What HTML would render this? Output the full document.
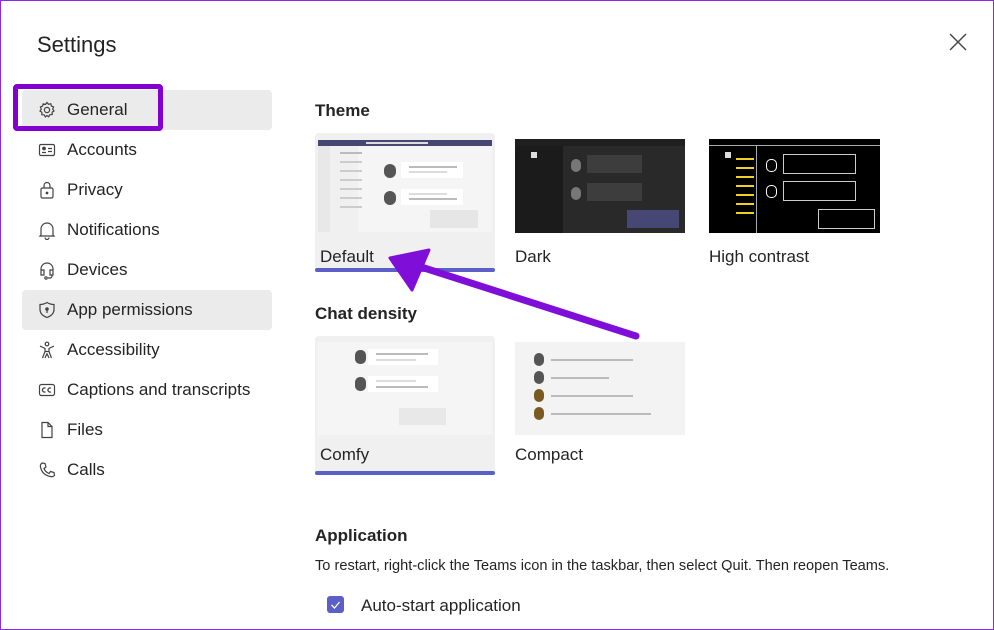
<!DOCTYPE html>
<html><head><meta charset="utf-8"><style>
*{margin:0;padding:0;box-sizing:border-box}
body{width:994px;height:630px;background:#fff;font-family:"Liberation Sans",sans-serif;color:#242424;position:relative;overflow:hidden}
.frame{position:absolute;inset:0;border:1.5px solid #8a2be2;pointer-events:none;z-index:9}
.abs{position:absolute}
.item{position:absolute;left:37px;height:20px;display:flex;align-items:center;font-size:17px;color:#242424}
.item svg{width:20px;height:20px;margin-right:10px;fill:none;stroke:#424242;stroke-width:1.2}
.h{font-weight:bold;font-size:17px;position:absolute}
.lbl{position:absolute;font-size:17px;color:#242424}
.bar{height:2px;background:#bbb;position:absolute}
.wb{background:#fff;position:absolute}
.wb i{display:block;position:absolute;left:8px;height:2px;background:#bbb}
</style></head><body>
<div class="frame"></div>
<div class="abs" style="left:37px;top:32px;font-size:22px">Settings</div>
<svg class="abs" style="left:949px;top:33px" width="18" height="18"><path d="M1 1L17 17M17 1L1 17" stroke="#424242" stroke-width="1.4"/></svg>

<div class="abs" style="left:22px;top:90px;width:250px;height:40px;background:#ebebeb;border-radius:4px"></div>
<div class="abs" style="left:22px;top:290px;width:250px;height:40px;background:#ebebeb;border-radius:4px"></div>
<div class="abs" style="left:13px;top:84px;width:150px;height:47px;border:5px solid #8300d0;border-radius:4px"></div>

<div class="item" style="top:100px"><svg viewBox="0 0 20 20"><circle cx="10" cy="10" r="2.6"/><path d="M10 2.5l1.5 1.8 2.3-.6.6 2.3 2.2.9-.9 2.2 1.3 1.9-1.9 1.2.1 2.4-2.4.1-1.1 2.1L10 15.6l-1.7 1.3-1.1-2.1-2.4-.1.1-2.4L3 11.1l1.3-1.9-.9-2.2 2.2-.9.6-2.3 2.3.6z"/></svg>General</div>
<div class="item" style="top:140px"><svg viewBox="0 0 20 20"><rect x="2.5" y="4.5" width="15" height="11" rx="1.5"/><circle cx="7" cy="8.5" r="1.3" fill="#424242"/><path d="M5 12.5h4M11 8.5h4M11 11.5h4"/></svg>Accounts</div>
<div class="item" style="top:180px"><svg viewBox="0 0 20 20"><rect x="4" y="8" width="12" height="10" rx="1.5"/><path d="M7 8V5.5a3 3 0 016 0V8"/><circle cx="10" cy="13" r=".8" fill="#424242"/></svg>Privacy</div>
<div class="item" style="top:220px"><svg viewBox="0 0 20 20"><path d="M4 15V9a6 6 0 0112 0v6l1 1H3z M8 17.5a2 2 0 004 0"/></svg>Notifications</div>
<div class="item" style="top:260px"><svg viewBox="0 0 20 20"><path d="M4 13V9a6 6 0 0112 0v4M4 10h3v5H4zM13 10h3v5h-3zM15 15v1a2 2 0 01-2 2h-2"/><circle cx="9" cy="18" r="1.2"/></svg>Devices</div>
<div class="item" style="top:300px"><svg viewBox="0 0 20 20"><path d="M10 2.5c2.5 1.5 4.5 2 7 2v5c0 4-3 6.5-7 8-4-1.5-7-4-7-8v-5c2.5 0 4.5-.5 7-2z"/><circle cx="10" cy="9" r="1.2" fill="#424242"/><path d="M10 10v3"/></svg>App permissions</div>
<div class="item" style="top:340px"><svg viewBox="0 0 20 20"><circle cx="10" cy="4" r="1.8"/><path d="M3 6l5 2.5v3L5.5 18M17 6l-5 2.5v3L14.5 18M8 11.5h4M10 13.5l-2 4.5M10 13.5l2 4.5"/></svg>Accessibility</div>
<div class="item" style="top:380px"><svg viewBox="0 0 20 20"><rect x="2.5" y="4.5" width="15" height="11" rx="2"/><path d="M8.5 8.3a2 2 0 100 3.4M14 8.3a2 2 0 100 3.4"/></svg>Captions and transcripts</div>
<div class="item" style="top:420px"><svg viewBox="0 0 20 20"><path d="M5 2.5h6l4 4v11H5zM11 2.5v4h4"/></svg>Files</div>
<div class="item" style="top:460px"><svg viewBox="0 0 20 20"><path d="M5 3l3 .5 1 3.5-2 1.5c1 2.5 2.5 4 5 5l1.5-2 3.5 1 .5 3c-1 1-2.5 1.5-4 1C8 15.5 4.5 12 3.5 7 3 5.5 3.8 4 5 3z"/></svg>Calls</div>

<div class="h" style="left:315px;top:101px">Theme</div>
<div class="abs" style="left:315px;top:133px;width:180px;height:139px;background:#f0f0f0;border-radius:4px"></div>
<div class="abs" style="left:315px;top:268px;width:180px;height:4px;background:#5b5fc7;border-radius:2px"></div>
<div class="abs" style="left:318px;top:140px;width:174px;height:92px;background:#f5f5f5">
 <div class="abs" style="left:0;top:0;width:174px;height:6px;background:#464775"></div>
 <div class="abs" style="left:48px;top:2px;width:62px;height:2px;background:#ddd"></div>
 <div class="abs" style="left:0;top:6px;width:12px;height:86px;background:#e8e8e8"></div>
 <div class="abs" style="left:12px;top:6px;width:28px;height:86px;background:#f0f0f0"></div>
 <div class="bar" style="left:22px;top:12px;width:22px;box-shadow:0 9px #ccc,0 18px #ccc,0 27px #ccc,0 36px #ccc,0 45px #ccc,0 54px #ccc"></div>
 <div class="abs" style="left:66px;top:24px;width:12px;height:14px;border-radius:6px;background:#555"></div>
 <div class="abs" style="left:66px;top:51px;width:12px;height:14px;border-radius:6px;background:#555"></div>
 <div class="wb" style="left:83px;top:22px;width:62px;height:16px"><i style="top:4px;width:48px"></i><i style="top:9px;width:38px;background:#ddd"></i></div>
 <div class="wb" style="left:83px;top:49px;width:62px;height:16px"><i style="top:4px;width:38px;background:#ddd"></i><i style="top:9px;width:48px"></i></div>
 <div class="abs" style="left:112px;top:70px;width:48px;height:18px;background:#e6e6e6"></div>
</div>
<div class="lbl" style="left:320px;top:247px">Default</div>
<div class="abs" style="left:515px;top:139px;width:170px;height:94px;background:#292929">
 <div class="abs" style="left:0;top:0;width:170px;height:7px;background:#1f1f1f"></div>
 <div class="abs" style="left:0;top:7px;width:48px;height:87px;background:#1b1b1b"></div>
 <div class="abs" style="left:16px;top:13px;width:6px;height:6px;background:#ddd"></div>
 <div class="abs" style="left:72px;top:16px;width:55px;height:18px;background:#3d3d3d"></div>
 <div class="abs" style="left:72px;top:44px;width:55px;height:18px;background:#3d3d3d"></div>
 <div class="abs" style="left:112px;top:71px;width:52px;height:18px;background:#464775"></div>
 <div class="abs" style="left:56px;top:20px;width:10px;height:13px;border-radius:5px;background:#777"></div>
 <div class="abs" style="left:56px;top:48px;width:10px;height:13px;border-radius:5px;background:#777"></div>
</div>
<div class="lbl" style="left:515px;top:247px">Dark</div>
<div class="abs" style="left:709px;top:139px;width:171px;height:94px;background:#000">
 <div class="abs" style="left:0;top:6px;width:171px;height:1px;background:#aaa"></div>
 <div class="abs" style="left:47px;top:7px;width:1px;height:87px;background:#aaa"></div>
 <div class="abs" style="left:16px;top:13px;width:6px;height:6px;background:#ddd"></div>
 <div class="abs" style="left:27px;top:19px;width:18px;height:2px;background:#f0d020;box-shadow:0 9px #f0d020,0 18px #f0d020,0 27px #f0d020,0 36px #f0d020,0 45px #f0d020,0 54px #f0d020"></div>
 <div class="abs" style="left:74px;top:15px;width:73px;height:20px;border:1px solid #ccc"></div>
 <div class="abs" style="left:74px;top:42px;width:73px;height:20px;border:1px solid #ccc"></div>
 <div class="abs" style="left:109px;top:70px;width:57px;height:20px;border:1px solid #ccc"></div>
 <div class="abs" style="left:57px;top:20px;width:11px;height:13px;border-radius:5px;border:1px solid #fff"></div>
 <div class="abs" style="left:57px;top:46px;width:11px;height:13px;border-radius:5px;border:1px solid #fff"></div>
</div>
<div class="lbl" style="left:709px;top:247px">High contrast</div>

<div class="h" style="left:315px;top:304px">Chat density</div>
<div class="abs" style="left:315px;top:336px;width:180px;height:139px;background:#f0f0f0;border-radius:4px"></div>
<div class="abs" style="left:315px;top:471px;width:180px;height:4px;background:#5b5fc7;border-radius:2px"></div>
<div class="abs" style="left:318px;top:342px;width:174px;height:93px;background:#f5f5f5">
 <div class="abs" style="left:37px;top:8px;width:11px;height:14px;border-radius:5px;background:#555"></div>
 <div class="abs" style="left:37px;top:35px;width:11px;height:14px;border-radius:5px;background:#555"></div>
 <div class="wb" style="left:50px;top:7px;width:70px;height:16px"><i style="top:4px;width:52px"></i><i style="top:10px;width:40px;background:#ddd"></i></div>
 <div class="wb" style="left:50px;top:34px;width:70px;height:16px"><i style="top:4px;width:40px;background:#ddd"></i><i style="top:10px;width:52px"></i></div>
 <div class="abs" style="left:81px;top:66px;width:47px;height:17px;background:#e8e8e8"></div>
</div>
<div class="lbl" style="left:320px;top:445px">Comfy</div>
<div class="abs" style="left:515px;top:342px;width:170px;height:93px;background:#f3f3f3">
 <div class="abs" style="left:19px;top:11px;width:10px;height:13px;border-radius:5px;background:#555"></div>
 <div class="abs" style="left:19px;top:29px;width:10px;height:13px;border-radius:5px;background:#555"></div>
 <div class="abs" style="left:19px;top:47px;width:10px;height:13px;border-radius:5px;background:#7a5a20"></div>
 <div class="abs" style="left:19px;top:65px;width:10px;height:13px;border-radius:5px;background:#7a5a20"></div>
 <div class="bar" style="left:36px;top:17px;width:82px"></div>
 <div class="bar" style="left:36px;top:35px;width:58px"></div>
 <div class="bar" style="left:36px;top:53px;width:82px"></div>
 <div class="bar" style="left:36px;top:71px;width:100px"></div>
</div>
<div class="lbl" style="left:515px;top:445px">Compact</div>

<div class="h" style="left:315px;top:526px">Application</div>
<div class="abs" style="left:315px;top:558px;font-size:14.6px;color:#242424;white-space:nowrap">To restart, right-click the Teams icon in the taskbar, then select Quit. Then reopen Teams.</div>
<div class="abs" style="left:327px;top:596px;width:17px;height:17px;background:#5b5fc7;border-radius:3px"></div>
<svg class="abs" style="left:327px;top:596px" width="17" height="17"><path d="M4.5 9l3 3 5-6" stroke="#fff" stroke-width="1.3" fill="none"/></svg>
<div class="lbl" style="left:361px;top:596px">Auto-start application</div>

<svg class="abs" style="left:0;top:0;z-index:5" width="994" height="630"><path d="M636 336L418 266" stroke="#7f0fd8" stroke-width="7" stroke-linecap="round"/><path d="M390 258L429 250L412 290Z" fill="#7f0fd8" stroke="#7f0fd8" stroke-width="3" stroke-linejoin="round"/></svg>
</body></html>
